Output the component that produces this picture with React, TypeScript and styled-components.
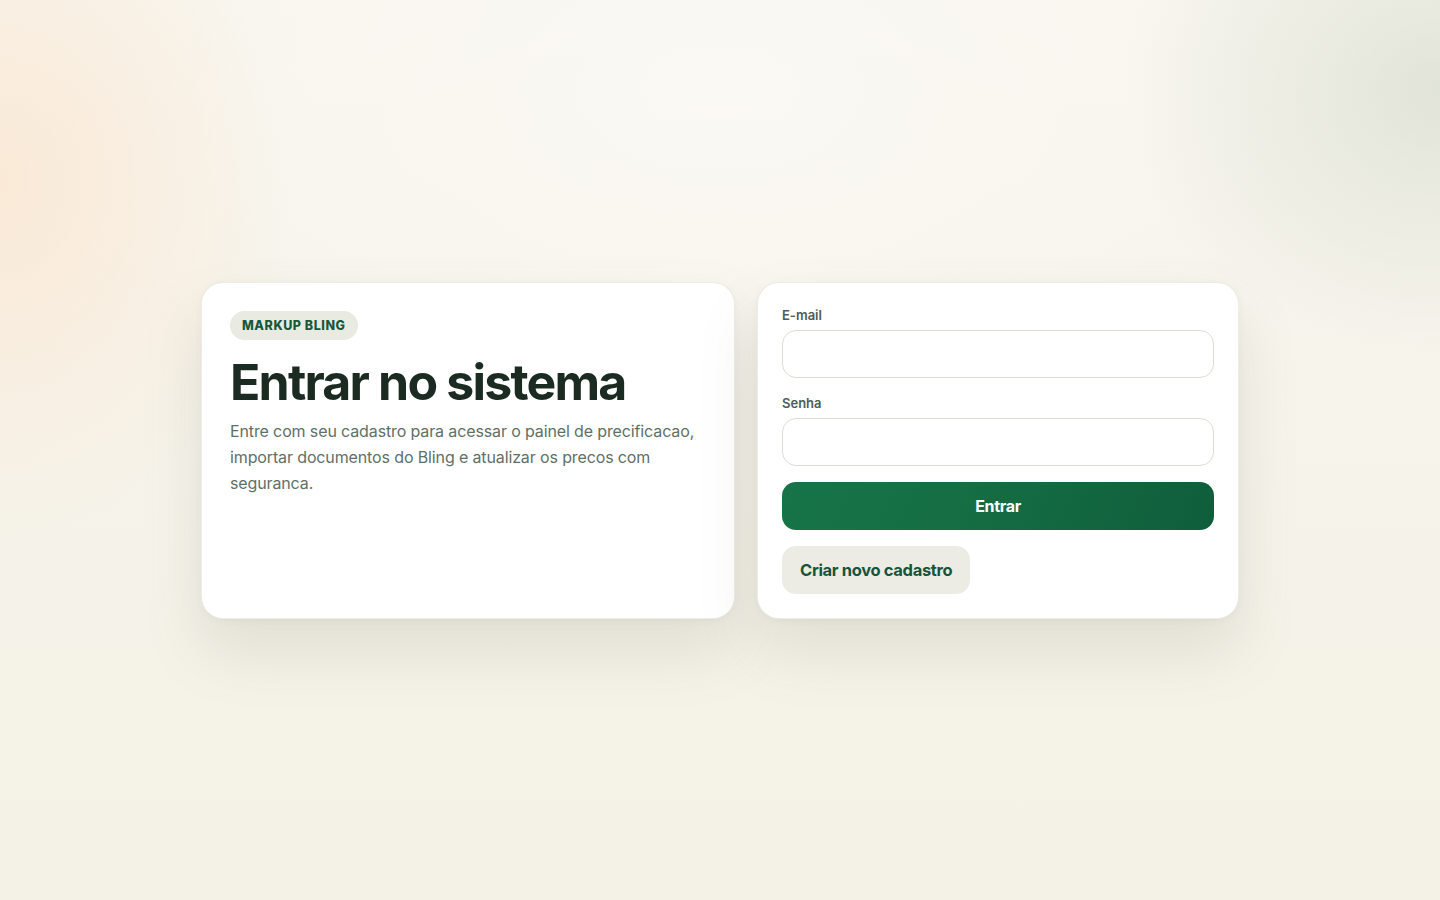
import React from "react";
import styled, { createGlobalStyle } from "styled-components";

const GlobalStyle = createGlobalStyle`
  * { box-sizing: border-box; }
  html, body, #root { margin: 0; padding: 0; height: 100%; }
  body {
    font-family: Inter, "Noto Sans", sans-serif;
    background: #f5f2e8;
  }
`;

const Page = styled.main`
  min-height: 100vh;
  display: flex;
  justify-content: center;
  align-items: center;
  background:
    radial-gradient(ellipse 420px 520px at 0% 20%, rgba(251, 228, 205, 0.7), transparent 70%),
    radial-gradient(ellipse 420px 360px at 100% 10%, rgba(223, 226, 214, 0.9), transparent 75%),
    radial-gradient(ellipse 700px 400px at 50% 10%, rgba(251, 249, 244, 0.9), transparent 80%),
    linear-gradient(180deg, #f8f6ef 0%, #f4f1e6 100%);
`;

const Layout = styled.div`
  display: grid;
  grid-template-columns: 534px 482px;
  gap: 22px;
`;

const Card = styled.section<{ $pad: number }>`
  background: #ffffff;
  border-radius: 22px;
  padding: ${(p) => p.$pad}px;
  box-shadow:
    0 32px 60px rgba(120, 120, 100, 0.16),
    0 2px 6px rgba(120, 120, 100, 0.06);
  border: 1px solid rgba(230, 228, 218, 0.7);
`;

const Badge = styled.span`
  display: inline-flex;
  align-items: center;
  height: 29px;
  padding: 0 12px;
  border-radius: 999px;
  background: #e9eae2;
  color: #17583a;
  font-size: 12.5px;
  font-weight: 800;
  letter-spacing: 0.045em;
  text-transform: uppercase;
`;

const Title = styled.h1`
  margin: 14px 0 0;
  font-size: 50px;
  line-height: 1.12;
  font-weight: 700;
  letter-spacing: -0.036em;
  color: #1c2b21;
`;

const Desc = styled.p`
  margin: 8px 0 0;
  font-size: 16px;
  line-height: 26px;
  color: #617067;
  letter-spacing: -0.008em;
  max-width: 478px;
`;

const Form = styled.form`
  display: flex;
  flex-direction: column;
`;

const Label = styled.label<{ $top?: number }>`
  margin-top: ${(p) => p.$top ?? 0}px;
  font-size: 13px;
  font-weight: 600;
  color: #4f5d54;
  line-height: 16px;
  margin-bottom: 7px;
`;

const Input = styled.input`
  height: 48px;
  border: 1px solid #dfddd3;
  border-radius: 14px;
  background: #ffffff;
  padding: 0 16px;
  font-size: 15px;
  font-family: inherit;
  outline: none;
`;

const Primary = styled.button`
  margin-top: 16px;
  height: 48px;
  border: none;
  border-radius: 14px;
  background: linear-gradient(110deg, #177448 0%, #156e44 40%, #0f5e3b 100%);
  color: #ffffff;
  font-family: inherit;
  font-size: 16px;
  font-weight: 700;
  letter-spacing: -0.02em;
  cursor: pointer;
`;

const Secondary = styled.button`
  margin-top: 16px;
  align-self: flex-start;
  height: 48px;
  padding: 0 18px;
  border: none;
  border-radius: 14px;
  background: #ecece5;
  color: #16553a;
  font-family: inherit;
  font-size: 16.5px;
  font-weight: 700;
  letter-spacing: -0.02em;
  cursor: pointer;
`;

export default function App() {
  return (
    <>
      <GlobalStyle />
      <Page>
        <Layout>
          <Card $pad={28}>
            <Badge>Markup Bling</Badge>
            <Title>Entrar no sistema</Title>
            <Desc>
              Entre com seu cadastro para acessar o painel de precificacao,
              importar documentos do Bling e atualizar os precos com seguranca.
            </Desc>
          </Card>
          <Card $pad={24}>
            <Form onSubmit={(e) => e.preventDefault()}>
              <Label htmlFor="email">E-mail</Label>
              <Input id="email" type="email" />
              <Label htmlFor="senha" $top={17}>
                Senha
              </Label>
              <Input id="senha" type="password" />
              <Primary type="submit">Entrar</Primary>
              <Secondary type="button">Criar novo cadastro</Secondary>
            </Form>
          </Card>
        </Layout>
      </Page>
    </>
  );
}
